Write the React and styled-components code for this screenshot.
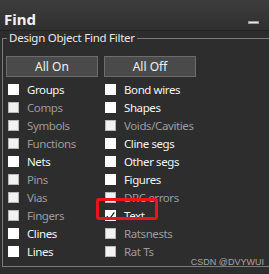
import React from "react";
import styled, { createGlobalStyle } from "styled-components";

const GlobalStyle = createGlobalStyle`
  html, body { margin: 0; padding: 0; background: #2d2d2d; }
  body { font-family: "Noto Sans", "Liberation Sans", sans-serif; }
`;

const Panel = styled.div`
  width: 269px;
  height: 274px;
  overflow: hidden;
  background: #2d2d2d;
  position: relative;
`;

const Header = styled.div`
  height: 31px;
  box-sizing: border-box;
  display: flex;
  align-items: flex-start;
  padding: 9px 10px 0 4px;
  background: linear-gradient(#3d3d3d, #2f2f2f);
  border-bottom: 1px solid #222;
`;

const Title = styled.div`
  font-size: 15px;
  line-height: 20px;
  font-weight: 700;
  color: #f2f2f2;
`;

const MinBar = styled.div`
  margin-left: auto;
  margin-top: 12px;
  width: 11px;
  height: 3px;
  box-sizing: border-box;
  background: #e8e8e8;
  border: 1px solid #9a9a9a;
`;

const GroupBox = styled.fieldset`
  margin: 0 -10px 0 2px;
  height: 236px;
  box-sizing: border-box;
  padding: 11px 0 4px 3px;
  border: 1px solid #7a7a7a;
  min-width: 0;
`;

const Legend = styled.legend`
  margin-left: 1px;
  padding: 0 2px;
  font-size: 11.5px;
  letter-spacing: -0.25px;
  line-height: 14px;
  color: #e8e8e8;
`;

const ButtonRow = styled.div`
  display: flex;
  gap: 6px;
`;

const Button = styled.button`
  width: 92px;
  height: 21px;
  box-sizing: border-box;
  padding: 0;
  background: #4a4a4a;
  border: 1px solid #6c6c6c;
  color: #f0f0f0;
  font-family: inherit;
  font-size: 12px;
  line-height: 19px;
`;

const Grid = styled.div`
  margin-top: 4px;
  padding-left: 2px;
  display: grid;
  grid-auto-flow: column;
  grid-template-rows: repeat(10, 18px);
  grid-template-columns: 97px 97px;
`;

const Item = styled.div`
  position: relative;
  display: flex;
  align-items: flex-start;
  gap: 8px;
  height: 18px;
`;

const Box = styled.span`
  margin-top: 3px;
  width: 11px;
  height: 11px;
  box-sizing: border-box;
  flex: none;
  display: flex;
  align-items: center;
  justify-content: center;
  background: ${(p) => (p.$disabled ? "#f2f2f2" : "#ffffff")};
  border: 1px solid ${(p) => (p.$disabled ? "#b8b8b8" : "#ffffff")};
`;

const Label = styled.span`
  font-size: 11.5px;
  letter-spacing: -0.4px;
  line-height: 18px;
  white-space: nowrap;
  color: ${(p) => (p.$disabled ? "#9c9c9c" : "#f4f4f4")};
`;

const Highlight = styled.div`
  position: absolute;
  left: -9px;
  top: -9px;
  width: 62px;
  height: 22px;
  box-sizing: border-box;
  border: 3px solid #e8161c;
  border-radius: 3px;
`;

const Watermark = styled.div`
  position: absolute;
  right: 5px;
  bottom: 7px;
  font-family: "Liberation Sans", sans-serif;
  font-size: 9px;
  line-height: 10px;
  color: #a6a6a6;
`;

const items = [
  ["Groups", false],
  ["Comps", true],
  ["Symbols", true],
  ["Functions", true],
  ["Nets", false],
  ["Pins", true],
  ["Vias", true],
  ["Fingers", true],
  ["Clines", false],
  ["Lines", false],
  ["Bond wires", false],
  ["Shapes", false],
  ["Voids/Cavities", true],
  ["Cline segs", false],
  ["Other segs", false],
  ["Figures", false],
  ["DRC errors", true],
  ["Text", false, true],
  ["Ratsnests", true],
  ["Rat Ts", true],
];

const Check = () => (
  <svg width="10" height="10" viewBox="0 0 10 10">
    <path d="M1 5.2 L3.8 8.4 L9.2 1" fill="none" stroke="#111" strokeWidth="1.3" />
  </svg>
);

export default function App() {
  return (
    <>
      <GlobalStyle />
      <Panel>
        <Header>
          <Title>Find</Title>
          <MinBar />
        </Header>
        <GroupBox>
          <Legend>Design Object Find Filter</Legend>
          <ButtonRow>
            <Button>All On</Button>
            <Button>All Off</Button>
          </ButtonRow>
          <Grid>
            {items.map(([name, disabled, checked]) => (
              <Item key={name}>
                {checked && <Highlight />}
                <Box $disabled={disabled}>{checked && <Check />}</Box>
                <Label $disabled={disabled}>{name}</Label>
              </Item>
            ))}
          </Grid>
        </GroupBox>
        <Watermark>CSDN @DVYWUI</Watermark>
      </Panel>
    </>
  );
}
